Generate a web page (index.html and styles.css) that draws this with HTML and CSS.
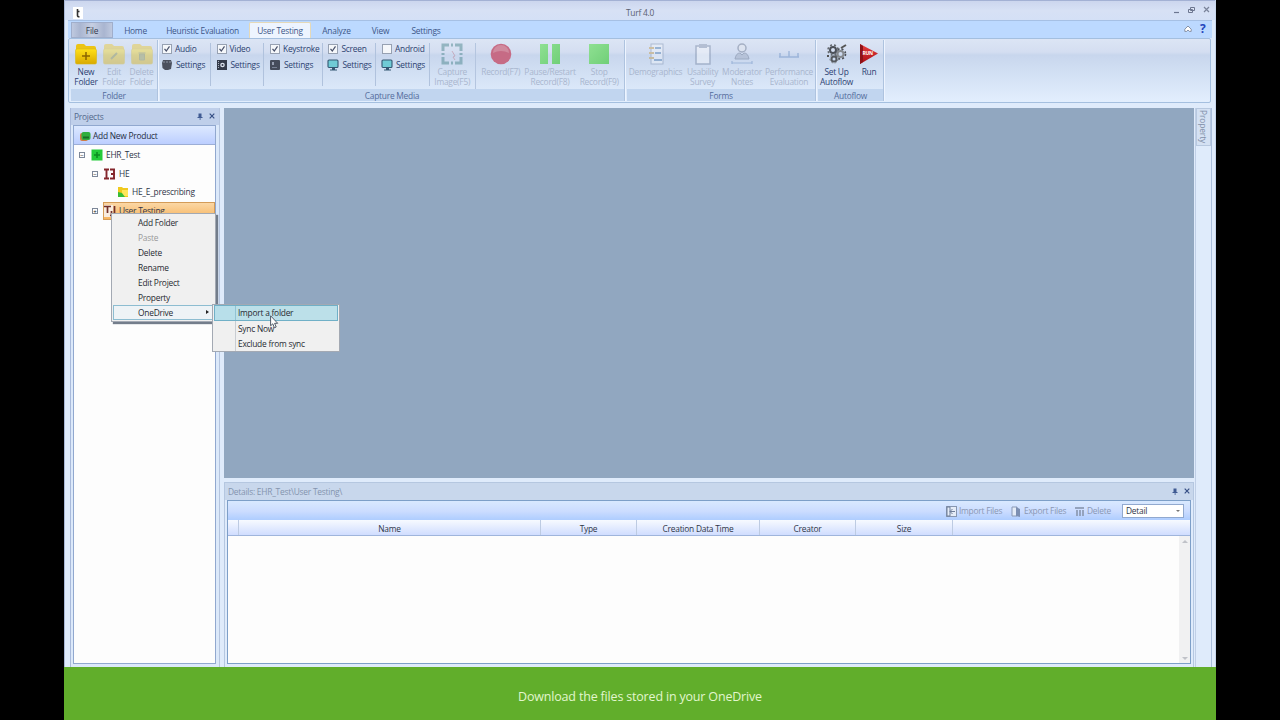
FILE: index.html
```html
<!DOCTYPE html>
<html lang="en">
<head>
<meta charset="utf-8">
<title>Turf 4.0</title>
<link rel="stylesheet" href="styles.css">
</head>
<body>
<svg class="defs" width="0" height="0">
  <defs>
    <linearGradient id="gold" x1="0" y1="0" x2="0" y2="1"><stop offset="0" stop-color="#ffe01a"/><stop offset="1" stop-color="#d9aa00"/></linearGradient>
    <linearGradient id="green" x1="0" y1="0" x2="1" y2="1"><stop offset="0" stop-color="#8fe092"/><stop offset="1" stop-color="#70cf78"/></linearGradient>
    <linearGradient id="red" x1="0" y1="0" x2="0" y2="1"><stop offset="0" stop-color="#e84040"/><stop offset="1" stop-color="#a80c14"/></linearGradient>
    <symbol id="folder" viewBox="0 0 22 22"><path d="M1 3q0-2 2-2h6l2 2h8q2 0 2 2v2H1z" fill="#ecc414"/><rect x="0.500" y="6" width="21" height="15" rx="1.500" fill="url(#gold)" stroke="#d9b818" stroke-width=".6"/></symbol>
    <symbol id="check" viewBox="0 0 10 10"><rect x=".5" y=".5" width="9" height="9" fill="#f5f7fa" stroke="#97a1b2"/><path d="M2.500 4.800l1.800 2.200L7.500 2.300" fill="none" stroke="#48506a" stroke-width="1.200"/></symbol>
    <symbol id="monitor" viewBox="0 0 12 12"><rect x="1" y="1" width="10" height="7.500" rx="1" fill="#6fcbd5" stroke="#345873" stroke-width="1.100"/><path d="M5 9h3v1.500h2v1H3v-1h2z" fill="#345873"/></symbol>
    <symbol id="pin" viewBox="0 0 6 7"><path d="M1.500.5h3v3.500h1v1h-5v-1h1zM2.700 5h.8v2h-.8z" fill="#3f5a92"/></symbol>
    <symbol id="cross" viewBox="0 0 6 6"><path d="M.7.7l4.600 4.600M5.300.7L.7 5.300" stroke="#364f85" stroke-width="1.200"/></symbol>
  </defs>
</svg>
<div class="stage">
<div class="window">
  <header class="titlebar">
    <svg class="app-icon" width="10" height="12" viewBox="0 0 10 12"><rect width="10" height="12" fill="#fff"/><path d="M4.500 2v6.500q0 1.500 2 1.200M4.500 4.500h2" fill="none" stroke="#333" stroke-width="1.600"/></svg>
    <span class="title">Turf 4.0</span>
    <svg class="win-buttons" width="36" height="10" viewBox="0 0 36 10"><path d="M1 7.500h5" stroke="#6c7690" stroke-width="1.200"/><path d="M17.500 2.500h4v3h-4zM15.500 4.500h4v3h-4z" fill="#dbe3f4" stroke="#6c7690" stroke-width="1"/><path d="M31 2l5 5M36 2l-5 5" stroke="#7a839a" stroke-width="1.200"/></svg>
  </header>
  <nav class="tabs">
    <span class="tab file">File</span><span class="tab home">Home</span><span class="tab heur">Heuristic Evaluation</span><span class="tab active">User Testing</span><span class="tab analyze">Analyze</span><span class="tab view">View</span><span class="tab settings">Settings</span>
    <svg class="collapse" width="8" height="8" viewBox="0 0 8 8"><path d="M.8 4.200L4 1l3.200 3.200v2.200H5.300L4 5 2.700 6.400H.8z" fill="#fff" stroke="#727c90" stroke-width=".8"/></svg>
    <b class="help">?</b>
  </nav>
  <section class="ribbon">
    <div class="group g-folder">
      <div class="tools">
        <div class="big w-new"><svg width="22" height="22"><use href="#folder"/><path d="M11 9v8M7 13h8" stroke="#8a6400" stroke-width="1.500"/></svg><span>New<br>Folder</span></div>
        <div class="big off w-edit"><svg width="22" height="22"><use href="#folder"/><path d="M8 16l6-6" stroke="#8a8a30" stroke-width="2"/></svg><span>Edit<br>Folder</span></div>
        <div class="big off w-del"><svg width="22" height="22"><use href="#folder"/><path d="M7.500 10h7M8.500 11h5v6h-5z" fill="#9a9a40" stroke="#8a8a30"/></svg><span>Delete<br>Folder</span></div>
      </div>
      <div class="caption">Folder</div>
    </div>
    <div class="group g-capture">
      <div class="tools">
        <div class="media m1"><div><svg width="10" height="10"><use href="#check"/></svg>Audio</div><div><svg width="12" height="12"><path d="M2 1h8l1 3-1 6-3 1H4L1.500 9 1 4z" fill="#4b505e"/><path d="M3 2v2M6 2v2M9 2v2" stroke="#8d94a4"/></svg>Settings</div></div>
        <div class="media m2"><div><svg width="10" height="10"><use href="#check"/></svg>Video</div><div><svg width="12" height="12"><rect x="1" y="1" width="10" height="10" fill="#343b4a"/><circle cx="6.500" cy="6" r="2.300" fill="#dce2ee"/><circle cx="6.500" cy="6" r="1" fill="#343b4a"/><path d="M2.500 2v8" stroke="#aab0be" stroke-dasharray="1 1"/></svg>Settings</div></div>
        <div class="media m3"><div><svg width="10" height="10"><use href="#check"/></svg>Keystroke</div><div><svg width="12" height="12"><rect x="1" y="1" width="10" height="10" rx="1" fill="#454c5b"/><path d="M3 3h2v3H3z" fill="#959eb0"/><path d="M3 8.500h5" stroke="#788295"/></svg>Settings</div></div>
        <div class="media m4"><div><svg width="10" height="10"><use href="#check"/></svg>Screen</div><div><svg width="12" height="12"><use href="#monitor"/></svg>Settings</div></div>
        <div class="media m5"><div><svg width="10" height="10"><rect x=".5" y=".5" width="9" height="9" fill="#f5f7fa" stroke="#97a1b2"/></svg>Android</div><div><svg width="12" height="12"><use href="#monitor"/></svg>Settings</div></div>
        <div class="big off w-cap"><svg width="22" height="22" viewBox="0 0 22 22"><path d="M2 8V2h6M14 2h6v6M20 14v6h-6M8 20H2v-6" fill="none" stroke="#2f7478" stroke-width="3"/><path d="M10 2h2M20 10v2M10 20h2M2 10v2" stroke="#2f7478" stroke-width="3"/><path d="M11 8l3 5-2 1 2 3" stroke="#b96a7a" fill="none"/></svg><span>Capture<br>Image(F5)</span></div>
        <div class="big off w-rec"><svg class="vivid" width="22" height="22"><circle cx="11" cy="11" r="10.300" fill="#c66b85"/><path d="M3 10a8 8 0 0 1 16 0q-8-4-16 0" fill="#d08a9e"/></svg><span>Record(F7)</span></div>
        <div class="big off w-pause"><svg class="vivid" width="22" height="22"><path d="M1 1h8v20H1zM13 1h8v20h-8z" fill="url(#green)"/></svg><span>Pause/Restart<br>Record(F8)</span></div>
        <div class="big off w-stop"><svg class="vivid" width="22" height="22"><rect x="1" y="1" width="20" height="20" fill="url(#green)"/></svg><span>Stop<br>Record(F9)</span></div>
      </div>
      <div class="caption">Capture Media</div>
    </div>
    <div class="group g-forms">
      <div class="tools">
        <div class="big off w-demo"><svg width="22" height="22"><rect x="6" y="1" width="12" height="20" fill="#f5f8fc" stroke="#7184a4"/><path d="M4 5h5M4 10h5M4 15h5" stroke="#c09030" stroke-width="2"/><path d="M10 5h6M10 10h6M9 17h8" stroke="#3f73a8" stroke-width="2"/></svg><span>Demographics</span></div>
        <div class="big off w-usab"><svg width="22" height="22"><rect x="4" y="3" width="14" height="18" fill="#fff" stroke="#667794" stroke-width="1.500"/><path d="M7 1h8v4H7z" fill="#7f8ca5"/></svg><span>Usability<br>Survey</span></div>
        <div class="big off w-mod"><svg width="22" height="22"><circle cx="11" cy="5" r="4" fill="#e7e9ee" stroke="#59667f" stroke-width="1.500"/><path d="M4 16q1-6 5-6l2 2 2-2q4 0 5 6z" fill="#9aa5ba" stroke="#59667f"/><path d="M1 20h20M1 18v3M21 18v3" stroke="#5b83bd" stroke-width="1.200"/></svg><span>Moderator<br>Notes</span></div>
        <div class="big off w-perf"><svg width="22" height="22"><path d="M1 14h20M2 10v4M11 8v6M20 10v4" stroke="#5b83bd" stroke-width="1.500"/></svg><span>Performance<br>Evaluation</span></div>
      </div>
      <div class="caption">Forms</div>
    </div>
    <div class="group g-auto">
      <div class="tools">
        <div class="big w-set"><svg width="22" height="22"><g fill="none"><circle cx="7" cy="7" r="3" stroke="#4b5058" stroke-width="2"/><circle cx="7" cy="7" r="5" stroke="#666b72" stroke-width="1.600" stroke-dasharray="2 2"/><circle cx="14.500" cy="11" r="3" stroke="#85898e" stroke-width="2"/><circle cx="14.500" cy="11" r="5" stroke="#4c5057" stroke-width="1.600" stroke-dasharray="2 2"/><circle cx="8" cy="16" r="2.500" stroke="#55595f" stroke-width="2"/><circle cx="8" cy="16" r="4" stroke="#777b80" stroke-dasharray="2 1.500"/><path d="M15 5l5-3M3 13H1" stroke="#555" stroke-width="2"/></g></svg><span>Set Up<br>Autoflow</span></div>
        <div class="big w-run"><svg width="22" height="22"><path d="M2 1l18 9.500L2 21z" fill="url(#red)"/><path d="M2 1l3 2v16l-3 2z" fill="#8d1218"/><text x="4.500" y="12" class="run-word">RUN</text></svg><span>Run</span></div>
      </div>
      <div class="caption">Autoflow</div>
    </div>
  </section>
  <main class="workspace">
    <aside class="projects">
      <div class="pane-title"><span>Projects</span><svg class="pin" width="6" height="7"><use href="#pin"/></svg><svg width="6" height="6"><use href="#cross"/></svg></div>
      <div class="tree">
        <div class="add"><svg width="11" height="11"><rect x="0" y="2" width="8" height="8" rx="2" fill="#cf7d45"/><rect x="1.500" y="1" width="9" height="8" rx="2" fill="#2fae3f"/><path d="M3 6.500h6" stroke="#176d28" stroke-width="2"/></svg>Add New Product</div>
        <div class="node n0"><i class="box">−</i><svg width="12" height="12"><rect x=".5" y=".5" width="11" height="11" fill="#25cb3a"/><path d="M6 3v6M3 6h6" stroke="#0c8d21" stroke-width="1.600"/></svg>EHR_Test</div>
        <div class="node n1"><i class="box">−</i><svg width="12" height="12"><path d="M0 1.500h5M0 10.500h5M2.500 1v10M6 1.500h5M7 6h4M6 10.500h5M10 1v10" stroke="#84262c" stroke-width="1.900"/></svg>HE</div>
        <div class="node n2"><svg width="12" height="12"><path d="M1 1h4l1 1h5v9H1z" fill="#f0c91e"/><path d="M5 4h6v6H5z" fill="#ffe65a"/><path d="M1 6l4 1 3 4H1z" fill="#38bd35"/></svg>HE_E_prescribing</div>
        <div class="node n1 selected"><i class="box">+</i><div class="sel"><svg width="12" height="12"><rect width="9" height="12" fill="#f8ece0"/><path d="M0 1.500h7M3.500 1v7M6 10.500h4M10.500 1v10M7.500 6v5" stroke="#73302a" stroke-width="1.700"/></svg>User Testing</div></div>
      </div>
    </aside>
    <div class="center">
      <div class="canvas"></div>
      <section class="details">
        <div class="pane-title dt"><span>Details: EHR_Test\User Testing\</span><svg class="pin" width="6" height="7"><use href="#pin"/></svg><svg width="6" height="6"><use href="#cross"/></svg></div>
        <div class="grid">
          <div class="toolbar">
            <span class="act a1"><svg width="11" height="11"><rect x=".5" y=".5" width="10" height="10" fill="#e5ecf7" stroke="#8796b0"/><path d="M1 1v9h3V1zM9 5.500H4M6.500 3L4 5.500 6.500 8" stroke="#6f7e9a" fill="none"/></svg>Import Files</span>
            <span class="act a2"><svg width="11" height="11"><path d="M1 1h5v9H1z" fill="#e3ebf7" stroke="#8999b5"/><path d="M5 1l4 2v8L5 10z" fill="#7c8fb2"/></svg>Export Files</span>
            <span class="act a3"><svg width="10" height="11"><path d="M0 1h9v2H0zM1 4h2v6H1zM4 4h2v6H4zM7 4h2v6H7z" fill="#94a3bd"/></svg>Delete</span>
            <span class="select">Detail<i></i></span>
          </div>
          <div class="cols"><span></span><span>Name</span><span>Type</span><span>Creation Data Time</span><span>Creator</span><span>Size</span><span></span></div>
          <div class="rows"><div class="scroll"><i class="up"></i><i class="down"></i></div></div>
        </div>
      </section>
    </div>
    <div class="rightbar"><span class="property">Property</span></div>
  </main>
  <div class="menu main-menu">
    <div>Add Folder</div><div class="dis">Paste</div><div>Delete</div><div>Rename</div><div>Edit Project</div><div>Property</div><div class="open">OneDrive<i></i></div>
  </div>
  <div class="menu sub-menu"><div class="hot">Import a folder</div><div>Sync Now</div><div>Exclude from sync</div></div>
  <svg class="cursor" width="9" height="14" viewBox="0 0 9 14"><path d="M.6.8v10l2.200-2 1.600 4 1.800-.8-1.600-3.700h3.100z" fill="#fff" stroke="#3e4a58" stroke-width=".9"/></svg>
</div>
<footer class="subtitle">Download the files stored in your OneDrive</footer>
</div>
</body>
</html>
```
FILE: styles.css
```css
* { box-sizing: border-box; }
body { margin: 0; background: #000; font: 8.400px/10px "Open Sans", "Noto Sans", sans-serif; letter-spacing: -.24px; color: #2f3648; }
svg { display: block; flex: none; overflow: visible; }
i { font-style: normal; }
.defs { position: absolute; }
.stage { width: 1152px; height: 720px; margin: 0 auto; overflow: hidden; display: flex; flex-direction: column; }
.window { position: relative; height: 667px; background: #dfebfb; border-left: 1px solid #a9b8d6; border-right: 1px solid #c7d6ec; display: flex; flex-direction: column; white-space: nowrap; }
.titlebar { height: 20px; flex: none; border-top: 1px solid #a3b1d4; background: linear-gradient(#ccd6ee, #d7e1f5 50%, #d4e0f6); display: flex; align-items: center; padding: 4px 6px 0 8px; }
.title { flex: 1; text-align: center; color: #5a6071; padding-left: 24px; }
.win-buttons { margin-top: -6px; }
.tabs { height: 18px; flex: none; display: flex; align-items: flex-end; margin: 0 3px; padding: 0 4px 0 3px; background: #bcd9ff; border-top: 1px solid #a6c0e4; color: #3c5788; }
.tab { height: 16px; padding-top: 4px; text-align: center; }
.file { width: 42px; color: #333b4c; background: linear-gradient(90deg, #bfc9df, #a9b5d0 20%, #c6cfe2 50%, #a9b5d0 80%, #bfc9df); border: 1px solid #a0aecb; padding-top: 3px; }
.home { width: 45px; }
.heur { width: 89px; }
.active { width: 62px; background: #edf4ff; border-radius: 2px 2px 0 0; border: 1px solid #e5d9b8; border-bottom: 0; padding-top: 3px; margin-left: 2px; }
.analyze { width: 51px; }
.view { width: 37px; }
.settings { width: 54px; }
.collapse { margin: 0 8px 5px auto; }
.help { color: #2446bd; font-size: 12px; line-height: 18px; width: 8px; }
.ribbon { height: 65px; flex: none; margin: 0 4px 0 3px; padding: 1px 0 0 2px; display: flex; gap: 2px; border: 1px solid #a4bfdf; border-radius: 2px; background: linear-gradient(#dce5f5 0, #d4def1 13px, #c8d6ed 16px, #d4e2f5 38px, #e2eefd 62px); }
.group { height: 61px; display: flex; flex-direction: column; border-right: 1px solid #aec3df; box-shadow: 1px 0 #edf4ff; }
.tools { height: 50px; display: flex; padding-top: 3px; }
.caption { height: 12px; line-height: 13px; text-align: center; background: #c1d5ef; color: #546c9c; }
.g-folder { width: 87px; } .g-capture { width: 465px; } .g-forms { width: 189px; } .g-auto { width: 66px; }
.big { display: flex; flex-direction: column; align-items: center; text-align: center; color: #2d4272; }
.big span { margin-top: 2px; }
.big.off { color: #a9b6ce; }
.off svg { opacity: .4; }
.off svg.vivid { opacity: 1; }
.w-new, .w-edit, .w-del { width: 28px; }
.w-new { margin-left: 1px; }
.w-edit, .w-del { margin-right: -.500px; }
.w-cap { width: 47px; border-right: 1px solid #b4c5df; }
.w-rec { width: 50px; } .w-pause { width: 49px; } .w-stop { width: 50px; }
.w-demo { width: 57px; } .w-usab { width: 37px; } .w-mod { width: 42px; } .w-perf { width: 52px; }
.w-set { width: 37px; } .w-run { width: 28px; }
.run-word { font: bold 5px "Open Sans", sans-serif; fill: #fff; }
.media { border-right: 1px solid #b0c2dd; height: 43px; padding-left: 2px; }
.media div { display: flex; align-items: center; height: 12px; gap: 3px; margin-bottom: 4px; color: #2c4270; }
.media div:first-child { padding-left: 1px; gap: 3px; margin-top: -.500px; margin-bottom: 4.500px; }
.m1 { width: 51px; padding-left: 1px; } .m2 { width: 54px; padding-left: 5px; } .m3 { width: 60px; padding-left: 5px; } .m4 { width: 53px; padding-left: 4px; } .m5 { width: 54px; padding-left: 5px; }
.workspace { display: flex; flex: 1; min-height: 0; padding-top: 5px; }
.projects { width: 150px; margin-left: 5px; padding: 0 3px 3px 2px; border-left: 1px solid #a9badb; border-right: 1px solid #b5c5df; background: #dce9fa; display: flex; flex-direction: column; flex: none; }
.pane-title { height: 17px; flex: none; display: flex; align-items: center; color: #53698c; background: #bfcfea; margin: 0 -3px 0 -2px; padding: 0 4px 0 3px; }
.pane-title svg { margin-top: -1px; }
.pane-title span { flex: 1; }
.pin { margin-right: 6px; }
.tree { flex: 1; border: 1px solid #91a8cf; background: #fdfdfd; display: flex; flex-direction: column; }
.add { height: 19px; border-bottom: 1px solid #9caed6; background: linear-gradient(#dde9ff, #bcceff); display: flex; align-items: center; gap: 2px; padding: 2px 0 0 6px; color: #252d42; }
.node { height: 18.500px; display: flex; align-items: center; gap: 3px; }
.node svg { margin-left: 3px; }
.n0 { padding-left: 5px; margin-top: 1px; } .n1 { padding-left: 18px; } .n2 { padding-left: 40px; }
.box { width: 6px; height: 6px; border: 1px solid #7d8798; font: 6px/4px "Liberation Sans", sans-serif; text-align: center; color: #222; letter-spacing: 0; }
.sel { flex: 1; height: 18px; display: flex; align-items: center; gap: 3px; border: 1px solid #d49c58; background: linear-gradient(#fbd7a5, #f7b560); margin-left: 2px; }
.sel svg { margin-left: 0; }
.center { width: 975px; flex: none; display: flex; flex-direction: column; padding-left: 4px; }
.canvas { height: 370px; background: #91a7c0; flex: none; width: 970px; }
.details { flex: 1; margin-top: 4px; padding: 0 2px 3px; border: 1px solid #b5c7e0; border-bottom: 0; display: flex; flex-direction: column; width: 970px; min-height: 0; }
.dt { background: #c8d7ec; color: #8494ae; margin-right: -2px; padding: 0 3px 0 3px; }
.grid { flex: 1; border: 1px solid #7d9fc8; background: #fdfdfd; display: flex; flex-direction: column; }
.toolbar { height: 19px; flex: none; background: linear-gradient(#d9e9ff, #cbdcff 55%, #aecdff); display: flex; align-items: center; justify-content: flex-end; padding: 1px 6px 0 0; }
.act { display: flex; align-items: center; gap: 2px; color: #8997b3; }
.a1 { width: 65px; } .a2 { width: 64px; } .a3 { width: 47px; }
.select { width: 62px; height: 14px; border: 1px solid #91a9cf; background: #fff; display: flex; align-items: center; justify-content: space-between; padding: 0 3px; }
.select i { border: 2px solid transparent; border-top-color: #777; border-bottom: 0; }
.cols { height: 16px; flex: none; display: grid; grid-template-columns: 11px 302px 96px 123px 96px 97px 1fr; text-align: center; background: linear-gradient(#f7faff, #d0ddff); border-bottom: 1px solid #9fb5dc; line-height: 17px; }
.cols span { border-right: 1px solid #bdcbe2; height: 15px; }
.cols span:last-child { border: 0; }
.rows { flex: 1; display: flex; justify-content: flex-end; }
.scroll { width: 11px; background: #f1f1f2; display: flex; flex-direction: column; justify-content: space-between; align-items: center; padding: 4px 0 3px; }
.scroll i { border: 3px solid transparent; }
.up { border-bottom-color: #c0c2c8 !important; border-top: 0 !important; }
.down { border-top-color: #c0c2c8 !important; border-bottom: 0 !important; }
.rightbar { flex: 1; border-left: 1px solid #c0cfe6; margin: 0 3px 0 0; border-right: 1px solid #a9bddb; }
.property { display: block; width: 15px; height: 38px; writing-mode: vertical-rl; line-height: 13px; text-align: center; color: #8290a9; border: 1px solid #b7c8df; background: #d4e1f3; letter-spacing: -.1px; }
.menu { position: absolute; background: #f0f0f0; border: 1px solid #a3a9b3; padding: 1px; color: #282b32; }
.menu div { height: 15px; line-height: 13px; border: 1px solid transparent; }
.menu .dis { color: #999; }
.main-menu { left: 46px; top: 213px; width: 105px; height: 109px; box-shadow: 2px 2px 1px #737d8b; }
.main-menu div { padding-left: 24px; line-height: 14px; height: 15.050px; }
.main-menu .open { position: relative; background: #eef3f6; border-color: #8dbdd1; }
.open i { position: absolute; right: 4px; top: 4px; border: 2.500px solid transparent; border-left: 3px solid #222; border-right: 0; }
.sub-menu { left: 147px; top: 304px; width: 128px; height: 48px; padding-top: 0; background: linear-gradient(90deg, #f0f0f0 22px, #c9cdd2 22px 23px, #f0f0f0 23px); }
.sub-menu div { padding-left: 23px; }
.sub-menu .hot { height: 16px; line-height: 14px; background: linear-gradient(90deg, #b8dfea 20px, #91c3d3 20px 21px, #bce0e9 21px); border-color: #70b0c7; }
.cursor { position: absolute; left: 205px; top: 315px; }
.subtitle { height: 53px; background: #61ae2b; color: #e2f6ce; text-align: center; font: 12.500px/59px "Open Sans", sans-serif; letter-spacing: -.18px; }
```
